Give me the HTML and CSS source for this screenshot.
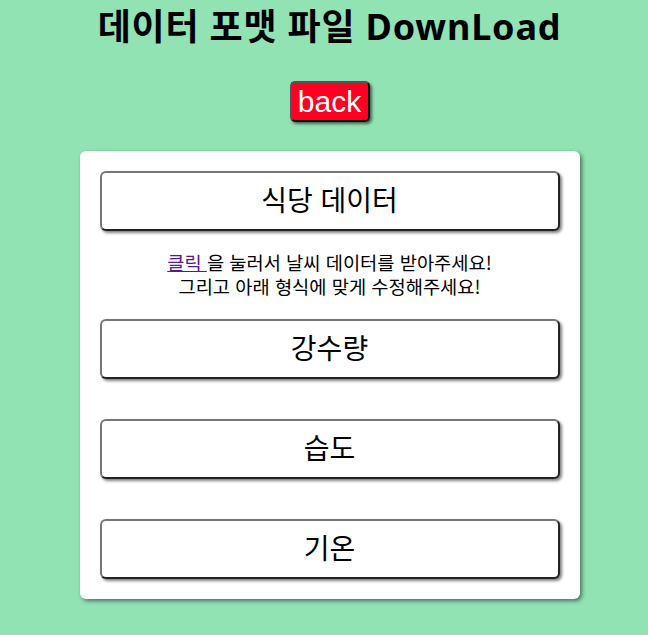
FILE: index.html
```html
<!DOCTYPE html>
<html lang="ko">
<head>
<meta charset="utf-8">
<link rel="stylesheet" href="styles.css">
</head>
<body>
<h1 class="title">데이터 포맷 파일 DownLoad</h1>
<div class="back-row"><button class="back">back</button></div>
<div class="card">
  <button class="dl">식당 데이터</button>
  <p class="note"><a href="#" class="link">클릭 </a>을 눌러서 날씨 데이터를 받아주세요!<br>그리고 아래 형식에 맞게 수정해주세요!</p>
  <button class="dl">강수량</button>
  <button class="dl spaced">습도</button>
  <button class="dl spaced">기온</button>
</div>
</body>
</html>
```
FILE: styles.css
```css
html, body { margin: 0; padding: 0; }
body {
  background: #92e3b4;
  font-family: "Noto Sans", "Noto Sans CJK KR", sans-serif;
  display: flex;
  flex-direction: column;
  align-items: center;
  height: 635px;
  overflow: hidden;
  padding-left: 11px;
  box-sizing: border-box;
}
.title {
  margin: 4px 0 0 0;
  font-size: 36px;
  font-weight: 700;
  line-height: 46px;
  letter-spacing: 0.8px;
  color: #000;
}
.back-row { margin-top: 31px; }
.back {
  font-family: "Liberation Sans", Arial, sans-serif;
  font-size: 30px;
  color: #fff;
  background: #ff0022;
  border: 2px solid;
  border-color: #555 #111 #111 #555;
  border-radius: 5px;
  width: 80px;
  height: 41px;
  padding: 0;
  line-height: 36px;
  box-shadow: 2px 2px 3px rgba(0,0,0,0.55);
}
.card {
  margin-top: 29px;
  width: 460px;
  background: #fff;
  border-radius: 6px;
  padding: 20px 20px 20px 20px;
  display: flex;
  flex-direction: column;
  align-items: stretch;
  box-shadow: 2px 2px 4px rgba(0,0,0,0.5);
}
.dl {
  height: 60px;
  background: #fff;
  border: 2px solid;
  border-color: #767676 #222 #222 #767676;
  border-radius: 6px;
  font-family: "Noto Sans CJK KR", sans-serif;
  font-size: 28px;
  color: #000;
  box-shadow: 2px 2px 3px rgba(0,0,0,0.5);
  padding: 0 0 4px 0;
}
.dl.spaced { margin-top: 40px; }
.note {
  margin: 19px 0 21px 0;
  text-align: center;
  font-family: "Noto Sans CJK KR", sans-serif;
  font-size: 18.7px;
  line-height: 24px;
  color: #000;
}
.link { color: #551a8b; }
```
